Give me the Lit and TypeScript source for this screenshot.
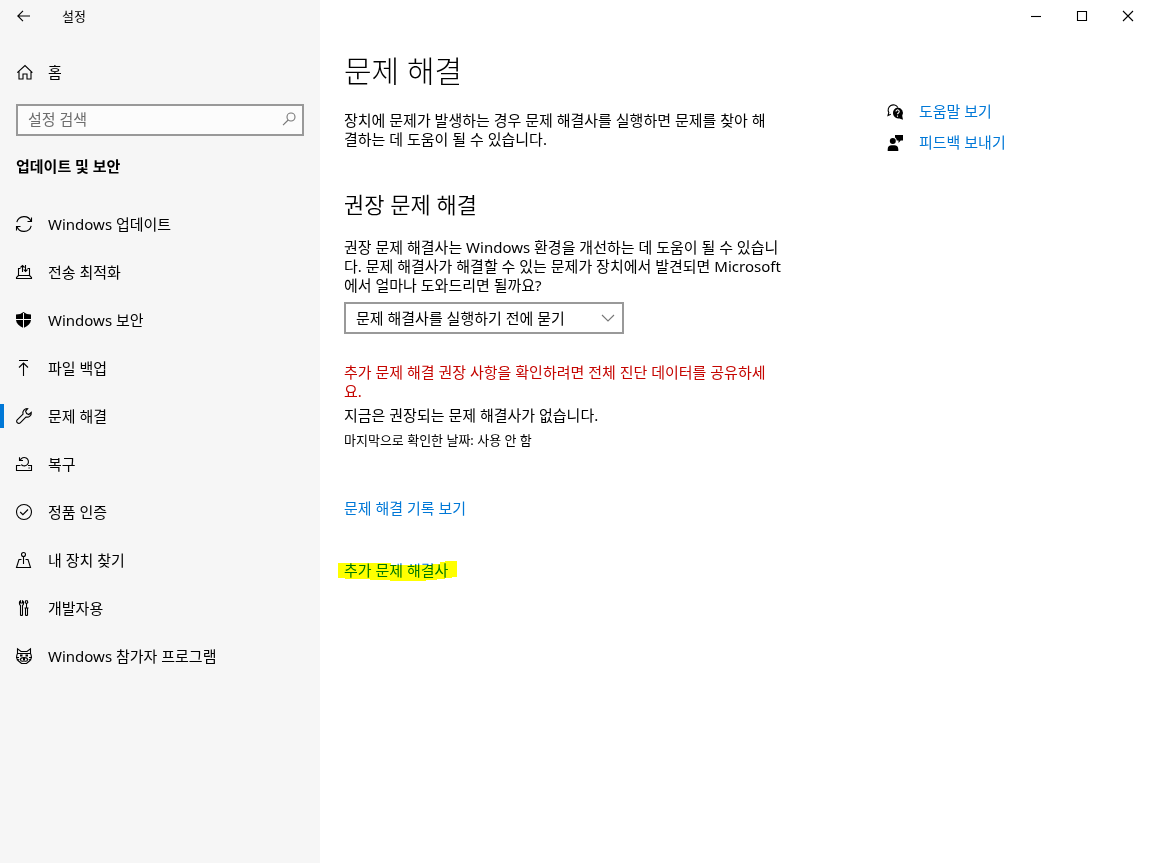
import { LitElement, html, css, svg } from "lit";
import { customElement, state } from "lit/decorators.js";

const icons = {
  back: svg`<path d="M14 8H2M7 2.8 1.8 8 7 13.2"/>`,
  home: svg`<path d="M1.3 8.7 9 1.500l7.400 7.200M3 7.500V15h4V10h4v5h4V7.500"/>`,
  search: svg`<circle cx="11" cy="6" r="4"/><path d="M8.200 9 3 14.200"/>`,
  update: svg`<path d="M.8 6.200A7.500 7.500 0 0 1 15.100 5.500M15.500 1.500v4h-4M15.200 9.800A7.500 7.500 0 0 1 .9 10.500M.5 14.500v-4h4"/>`,
  delivery: svg`<path d="M4.500 4.500h-2v7l-2 2v1h15v-1l-2-2v-7h-2M2.500 11.500h11M6.500 8V1.500M4.500 3.500l2-2 2 2M9.500 1v6.500M7.800 5.500l1.700 2 2-2"/>`,
  shield: svg`<path class="solid" d="M7.500 0C9.500 1.700 12 2.500 15 2.500V7H8V1H7v6H0V2.500C3 2.500 5.500 1.700 7.500 0ZM0 8h7v7.700C3 14 .3 11.500 0 8ZM8 8h7c-.3 3.500-3 6-7 7.700Z"/>`,
  backup: svg`<path d="M3 .5h9M7.500 16V3M3 7.500 7.500 3 12 7.500"/>`,
  repair: svg`<path d="M11.700.7A4.300 4.300 0 0 0 7 6.100L1.200 11.800a1.900 1.900 0 0 0 0 2.700l.3.300a1.900 1.900 0 0 0 2.700 0L9.900 9a4.300 4.300 0 0 0 5.400-4.700L12.800 6.500l-2.200-1-1-2.300Z"/>`,
  recovery: svg`<path d="M4.500 9.500h-4v5h15v-5h-3.500M3.500 1.200v3.300h3.500M4.300 4.300A4.200 4.200 0 1 1 5.300 8.700M5.300 8.700l1.700 1M12.500 12h1.200"/>`,
  activation: svg`<circle cx="8" cy="8" r="7.500"/><path d="m4.200 8 2.700 2.700L12 5.500"/>`,
  find: svg`<circle cx="7.500" cy="2.500" r="2"/><path d="M7.500 4.500V12M5.500 7.500H3l-2.500 8h14l-2.500-8H9.500"/>`,
  developer: svg`<path d="M4.500 15V5.500C3 4.500 3 1.500 4.500.8V3h2V.8C8 1.500 8 4.500 6.500 5.500V15q-1 1-2 0ZM9.700.7h1.600l.5 1.600-1.300 1.500-1.300-1.500ZM10.500 3.800V8M8.500 8h4M9.500 8v7q1 1 2 0V8"/>`,
  insider: svg`<path d="M1.500 5.500V.8L5 3.500h6L14.500.8v4.700M1 5.500h14M1.500 5.500C.4 7.500.4 10.500 2 12.500l3.500 3h5l3.500-3c1.600-2 1.600-5 .5-7M4.500 11.500c0-2.500 7-2.500 7 0s-3.500 2-3.500.7c0 1.300-3.500 1.800-3.500-.7M0 9.500h3M16 9.500h-3M.8 12l2.500-.5M15.200 12l-2.500-.5"/><path class="solid" d="M4 6.500h2.500v2H4zM9.500 6.500H12v2H9.500zM7 10h2v2H7z"/>`,
  help: svg`<path d="M3.800 10.300 1 11.500l.8-3A5 5 0 1 1 10.800 3.500"/><path class="solid" d="M10.500 3.500a5.500 5.500 0 0 1 4.700 8.300l.8 4-3.500-1.400A5.500 5.500 0 1 1 10.500 3.500Z"/><path class="mark" d="M9 7.500a1.600 1.600 0 1 1 2.400 1.400c-.7.400-.9.700-.9 1.400M10.500 11.500v1.200"/>`,
  feedback: svg`<circle class="solid" cx="5.800" cy="6" r="3"/><path class="solid" d="M.7 16v-1.700c0-2.500 1.500-4 4-4h2.600c2.500 0 4 1.500 4 4V16ZM8 0h8v5.500h-2.300L11.500 8V5.500H9.700C9.700 4 9 3 8 2.500Z"/>`,
  minimize: svg`<path d="M3 8.500h10"/>`,
  maximize: svg`<path d="M3.500 3.500h9v9h-9z"/>`,
  close: svg`<path d="m3 3 10 10M13 3 3 13"/>`,
  chevron: svg`<path d="m2 5 6 6 6-6"/>`,
};
type IconName = keyof typeof icons;

const icon = (name: IconName) =>
  html`<svg class="icon" viewBox="0 0 16 16" aria-hidden="true">${icons[name]}</svg>`;

const pages: { icon: IconName; label: string }[] = [
  { icon: "update", label: "Windows 업데이트" },
  { icon: "delivery", label: "전송 최적화" },
  { icon: "shield", label: "Windows 보안" },
  { icon: "backup", label: "파일 백업" },
  { icon: "repair", label: "문제 해결" },
  { icon: "recovery", label: "복구" },
  { icon: "activation", label: "정품 인증" },
  { icon: "find", label: "내 장치 찾기" },
  { icon: "developer", label: "개발자용" },
  { icon: "insider", label: "Windows 참가자 프로그램" },
];

@customElement("app-root")
export class AppRoot extends LitElement {
  @state() private current = "문제 해결";

  static styles = css`
    :host {
      display: block;
      color: #000;
      font: 15px/19px "Noto Sans", "Noto Sans CJK KR", sans-serif;
    }
    * {
      box-sizing: border-box;
    }
    h1, h2, p, ul {
      margin: 0;
      padding: 0;
    }
    a {
      color: #0078d7;
      text-decoration: none;
    }
    button {
      display: grid;
      place-items: center;
      padding: 0;
      border: 0;
      background: none;
      color: inherit;
    }
    .icon {
      display: block;
      flex: none;
      width: 16px;
      height: 16px;
      overflow: visible;
      fill: none;
      stroke: currentColor;
      stroke-width: 1.1;
    }
    .solid {
      fill: currentColor;
      stroke: none;
    }
    .mark {
      stroke: #fff;
    }
    .window {
      display: grid;
      grid-template-columns: 320px minmax(0, 1fr);
      min-height: 100vh;
      background: #fff;
    }
    .sidebar {
      background: #f6f6f6;
    }
    .titlebar {
      display: flex;
      align-items: center;
      height: 32px;
      font-size: 13px;
    }
    .back {
      width: 48px;
      height: 32px;
      margin-right: 14px;
    }
    .item {
      display: flex;
      align-items: center;
      gap: 16px;
      height: 48px;
      padding: 0 16px;
      color: #000;
      border-left: 0 solid #0078d7;
    }
    .item.current {
      padding-left: 12px;
      border-image: linear-gradient(transparent 12px, #0078d7 12px 36px, transparent 36px) 0 0 0 4;
      border-left-width: 4px;
    }
    .home {
      margin: 16px 0 8px;
    }
    .search {
      display: flex;
      align-items: center;
      height: 32px;
      margin: 0 16px;
      padding: 0 6px 2px 10px;
      border: 2px solid #999;
      background: #fcfcfc;
      color: #777;
    }
    .search input {
      flex: 1;
      min-width: 0;
      padding: 0;
      border: 0;
      outline: 0;
      background: none;
      font: inherit;
    }
    .search input::placeholder {
      color: #6d6d6d;
      opacity: 1;
    }
    .group {
      margin: 20px 16px 24px;
      line-height: 20px;
      font-weight: 700;
    }
    .pages {
      list-style: none;
    }
    .controls {
      justify-content: flex-end;
    }
    .controls button {
      width: 46px;
      height: 32px;
      padding-left: 2px;
    }
    .page {
      display: grid;
      grid-template-columns: minmax(0, 450px) minmax(0, 1fr);
      column-gap: 93px;
      padding: 19px 24px;
    }
    h1 {
      grid-column: 1 / -1;
      margin-bottom: 20px;
      font-size: 30px;
      line-height: 40px;
      font-weight: 300;
    }
    h2 {
      margin: 40px 0 19px;
      font-size: 22px;
      line-height: 30px;
      font-weight: 350;
    }
    .choice {
      display: grid;
      align-items: center;
      width: 280px;
      max-width: 100%;
      margin: 7px 0 29px;
    }
    .choice > * {
      grid-area: 1 / 1;
    }
    .choice select {
      appearance: none;
      width: 100%;
      height: 32px;
      padding: 0 32px 0 10px;
      border: 2px solid #999;
      border-radius: 0;
      background: #fff;
      color: #000;
      font: inherit;
    }
    .choice .icon {
      justify-self: end;
      margin-right: 8px;
      color: #777;
      pointer-events: none;
    }
    .warning {
      margin-bottom: 5px;
      color: #c50500;
    }
    .checked {
      margin: 6px 0 49px;
      font-size: 13px;
    }
    .more {
      margin-top: 43px;
    }
    .marked {
      position: relative;
      display: inline-block;
    }
    .marker {
      position: absolute;
      top: 0;
      left: -6px;
      width: 120px;
      height: 22px;
      fill: #ff0;
      mix-blend-mode: multiply;
      pointer-events: none;
    }
    .links {
      display: grid;
      align-content: start;
      gap: 12px;
      margin-top: -9px;
    }
    .links a {
      display: flex;
      align-items: center;
      gap: 16px;
    }
    .links .icon {
      color: #000;
    }
  `;

  render() {
    return html`
      <div class="window">
        <nav class="sidebar" aria-label="설정">
          <div class="titlebar">
            <button class="back" aria-label="뒤로">${icon("back")}</button>
            <span>설정</span>
          </div>
          <a class="item home" href="#home">${icon("home")}<span>홈</span></a>
          <label class="search">
            <input type="text" placeholder="설정 검색" aria-label="설정 검색" />
            ${icon("search")}
          </label>
          <p class="group">업데이트 및 보안</p>
          <ul class="pages">
            ${pages.map(
              (page) => html`<li>
                <a
                  class="item ${page.label === this.current ? "current" : ""}"
                  href="#page"
                  @click=${() => (this.current = page.label)}
                  >${icon(page.icon)}<span>${page.label}</span></a
                >
              </li>`
            )}
          </ul>
        </nav>
        <div>
          <div class="titlebar controls">
            <button aria-label="최소화">${icon("minimize")}</button>
            <button aria-label="최대화">${icon("maximize")}</button>
            <button aria-label="닫기">${icon("close")}</button>
          </div>
          <main class="page">
            <h1>문제 해결</h1>
            <section>
              <p>
                장치에 문제가 발생하는 경우 문제 해결사를 실행하면 문제를 찾아 해<br />결하는 데 도움이 될 수 있습니다.
              </p>
              <h2>권장 문제 해결</h2>
              <p id="question">
                권장 문제 해결사는 Windows 환경을 개선하는 데 도움이 될 수 있습니<br />다. 문제 해결사가 해결할 수 있는 문제가 장치에서 발견되면 Microsoft<br />에서 얼마나 도와드리면 될까요?
              </p>
              <div class="choice">
                <select aria-labelledby="question">
                  <option>문제 해결사를 실행하기 전에 묻기</option>
                </select>
                ${icon("chevron")}
              </div>
              <p class="warning">
                추가 문제 해결 권장 사항을 확인하려면 전체 진단 데이터를 공유하세<br />요.
              </p>
              <p>지금은 권장되는 문제 해결사가 없습니다.</p>
              <p class="checked">마지막으로 확인한 날짜: 사용 안 함</p>
              <p><a href="#history">문제 해결 기록 보기</a></p>
              <p class="more">
                <a class="marked" href="#more"
                  >추가 문제 해결사<svg class="marker" viewBox="0 0 120 22" aria-hidden="true">
                    <path d="M0 2h53v2h41V3h8V1h5V0h12v16h-5v1h-7v1h-8v1h-11v1H52v-1H32v-1H7v-1H0Z" /></svg
                ></a>
              </p>
            </section>
            <aside class="links">
              <a href="#help">${icon("help")}<span>도움말 보기</span></a>
              <a href="#feedback">${icon("feedback")}<span>피드백 보내기</span></a>
            </aside>
          </main>
        </div>
      </div>
    `;
  }
}
